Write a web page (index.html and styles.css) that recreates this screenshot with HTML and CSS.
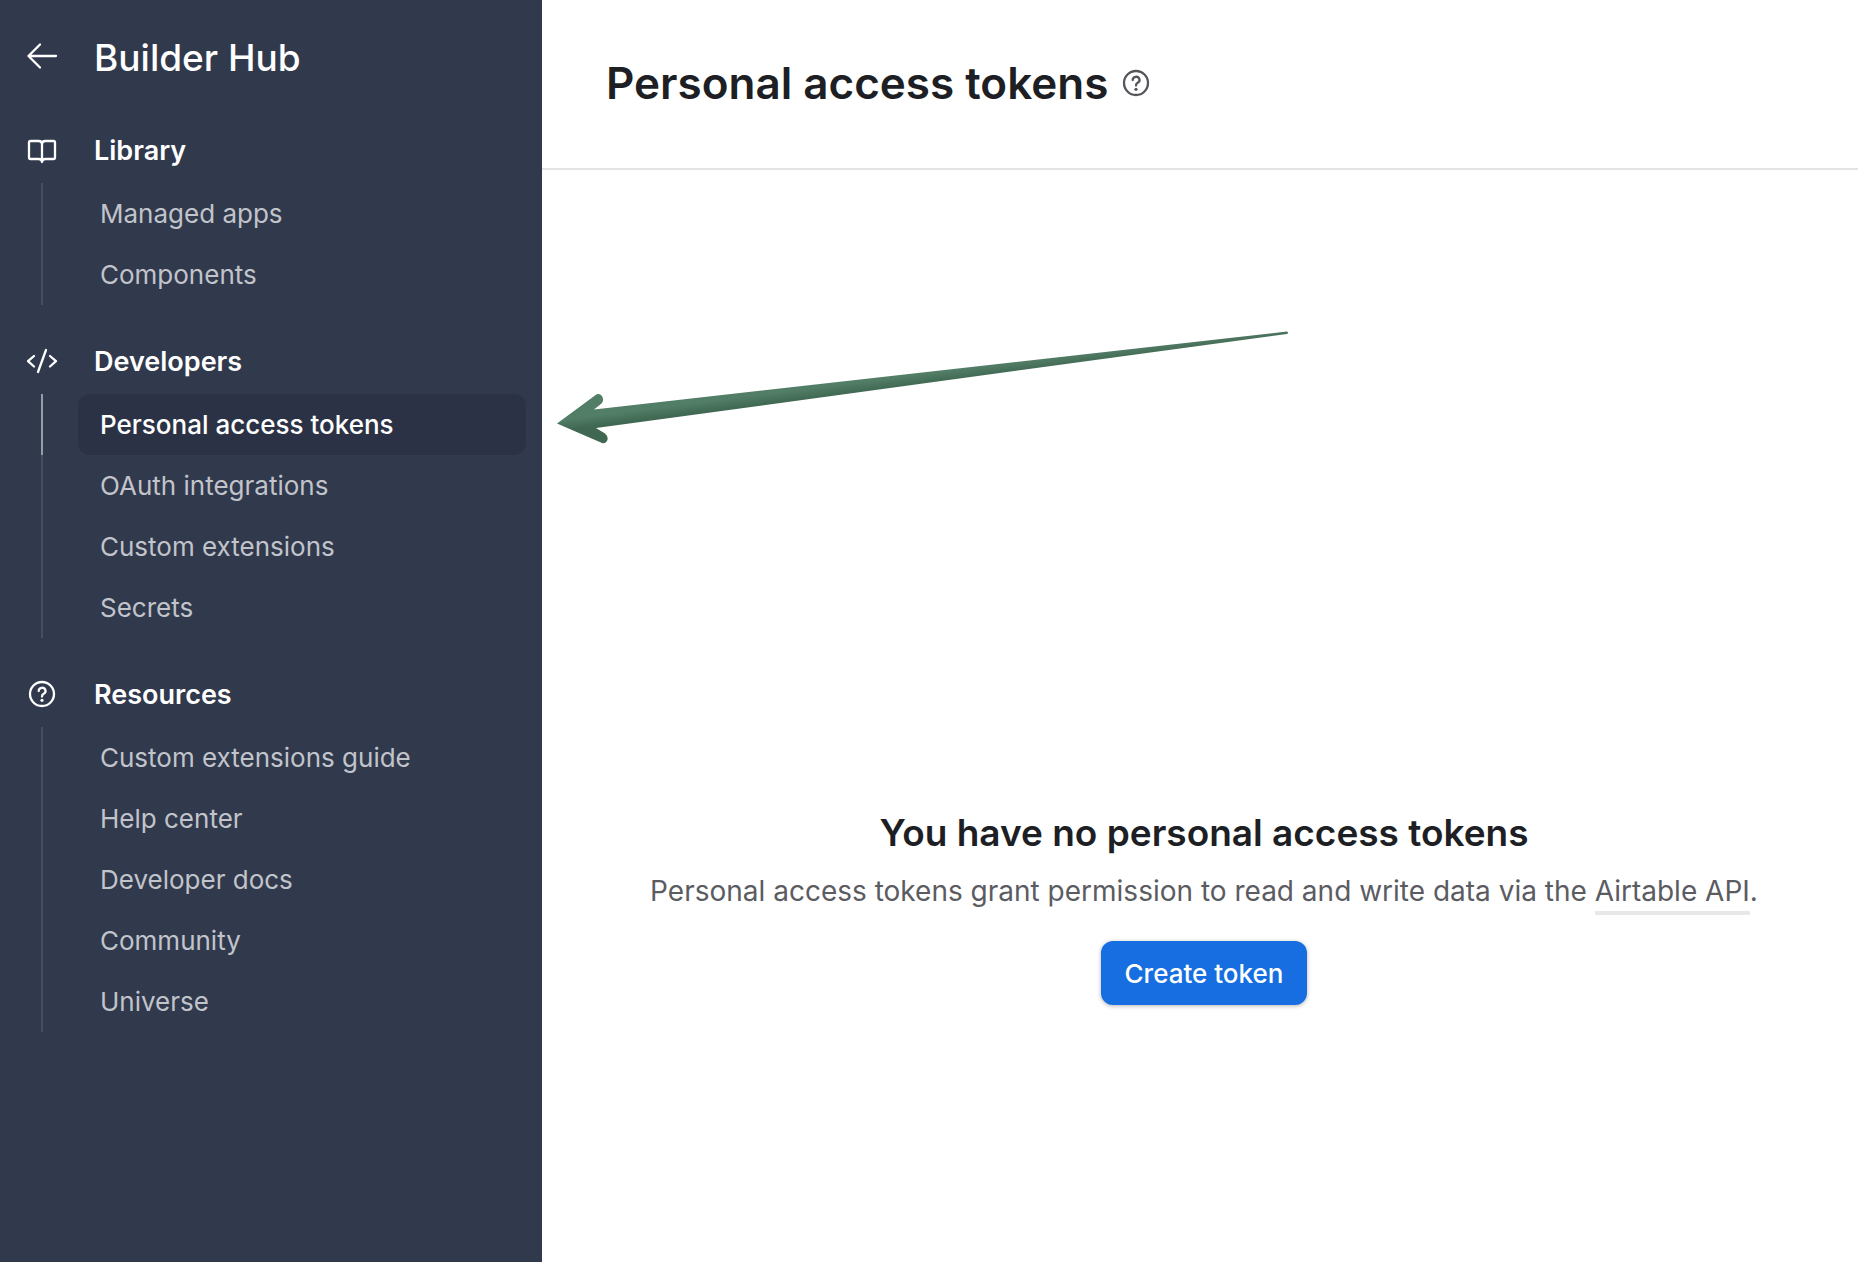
FILE: index.html
```html
<!DOCTYPE html>
<html lang="en">
<head>
    <meta charset="utf-8">
    <meta name="viewport" content="width=device-width, initial-scale=1.0">
    <link rel="stylesheet" href="styles.css">
    <title>Personal access tokens - Builder Hub</title>
</head>

<body>
    <div id="container">

        <nav id="sidebar">
            <div class="row sidebar-title">
                <a class="icon" href="#" aria-label="Back">
                    <svg viewBox="0 0 32 32"><path d="M2.500 15h27.500M14 3.500L2.500 15L14 26.500"/></svg>
                </a>
                <span>Builder Hub</span>
            </div>

            <div class="group">
                <h2 class="row">
                    <span class="icon">
                        <svg viewBox="0 0 32 32"><path d="M16 10v17.500M16 10c0-2-1.500-3-3.500-3H4.500Q3 7 3 8.500v15Q3 25 4.500 25h8c2 0 3.500 1 3.500 3c0-2 1.500-3 3.500-3h8q1.500 0 1.500-1.500v-15Q29 7 27.500 7h-8c-2 0-3.500 1-3.500 3z"/></svg>
                    </span>
                    Library
                </h2>
                <ul>
                    <li><a href="#">Managed apps</a></li>
                    <li><a href="#">Components</a></li>
                </ul>
            </div>

            <div class="group">
                <h2 class="row">
                    <span class="icon">
                        <svg viewBox="0 0 32 32"><path d="M8 11L2 16.200L8 21.500M24 11L30 16.200L24 21.500M20 5L12 27"/></svg>
                    </span>
                    Developers
                </h2>
                <ul>
                    <li class="active"><a href="#">Personal access tokens</a></li>
                    <li><a href="#">OAuth integrations</a></li>
                    <li><a href="#">Custom extensions</a></li>
                    <li><a href="#">Secrets</a></li>
                </ul>
            </div>

            <div class="group">
                <h2 class="row">
                    <span class="icon">
                        <svg viewBox="0 0 32 32"><circle cx="16" cy="16" r="12"/><path d="M12.700 13a3.400 3.200 0 1 1 5 2.800Q16 16.700 16 18.500"/><circle class="dot" cx="16" cy="22.300" r="1.600"/></svg>
                    </span>
                    Resources
                </h2>
                <ul>
                    <li><a href="#">Custom extensions guide</a></li>
                    <li><a href="#">Help center</a></li>
                    <li><a href="#">Developer docs</a></li>
                    <li><a href="#">Community</a></li>
                    <li><a href="#">Universe</a></li>
                </ul>
            </div>
        </nav>

        <main id="content">
            <header>
                <h1>Personal access tokens</h1>
                <button class="help" aria-label="Help">
                    <svg viewBox="0 0 32 32"><circle cx="16" cy="16" r="12"/><path d="M12.700 13a3.400 3.200 0 1 1 5 2.800Q16 16.700 16 18.500"/><circle class="dot" cx="16" cy="22.300" r="1.600"/></svg>
                </button>
            </header>

            <section class="empty">
                <h3>You have no personal access tokens</h3>
                <p>Personal access tokens grant permission to read and write data via the <a href="#">Airtable API</a>.</p>
                <button class="create">Create token</button>
            </section>

            <!-- arrow pointing at the active sidebar item -->
            <svg class="pointer" viewBox="0 0 732 114" aria-hidden="true">
                <defs>
                    <linearGradient id="green" gradientUnits="userSpaceOnUse" x1="200" y1="65" x2="201.400" y2="76">
                        <stop offset="0" stop-color="#527d67"/>
                        <stop offset="1" stop-color="#3f6751"/>
                    </linearGradient>
                </defs>
                <path fill="url(#green)" d="M0 93.500L38 65.500Q41 63 44 65Q48 69 44.500 73.500L37 79.500L730 1.500Q732 2.500 730 4L39 98L48 103.500Q52 107 50 111Q48 114 45 113Z"/>
            </svg>
        </main>

    </div>
</body>
</html>
```
FILE: styles.css
```css
body {
    margin: 0px;
    font-family: Inter, "Liberation Sans", sans-serif;
    color: #1d1f25;
    background-color: white;
}

h1, h2, h3, p, ul {
    margin: 0px;
    padding: 0px;
}

a {
    color: inherit;
    text-decoration: none;
}

button {
    border: 0px;
    font-family: inherit;
    cursor: pointer;
}

svg {
    display: block;
    fill: none;
    stroke: currentColor;
    stroke-width: 2.3;
    stroke-linecap: round;
    stroke-linejoin: round;
}

.dot {
    fill: currentColor;
    stroke: none;
}

#container {
    display: flex;
    min-height: 100vh;
}

/* sidebar */
#sidebar {
    box-sizing: border-box;
    flex: 0 0 542px;
    padding: 24px 16px 24px 26px;
    background-color: #31394d;
    color: white;
}

.row {
    display: flex;
    align-items: center;
    gap: 36px;
    height: 66px;
    font-size: 27px;
    font-weight: 600;
}

.sidebar-title {
    margin-bottom: 27px;
    font-size: 37px;
    font-weight: 500;
}

.icon {
    width: 32px;
    height: 32px;
}

.group {
    margin-bottom: 23px;
}

.group ul {
    margin-left: 15px;
    list-style: none;
    background: linear-gradient(#474e60, #474e60) left / 2px 100% no-repeat;
}

.group li {
    padding-left: 35px;
    border-left: 2px solid transparent;
}

.group li a {
    display: block;
    padding: 0px 22px;
    border-radius: 12px;
    line-height: 61px;
    font-size: 26px;
    color: #c1c4ca;
}

.group .active {
    border-left-color: #989ca6;
}

.group .active a {
    background-color: #2c3245;
    color: white;
    font-weight: 500;
}

/* main page */
#content {
    position: relative;
    flex: 1;
}

header {
    display: flex;
    align-items: center;
    gap: 12px;
    height: 165px;
    padding: 0px 0px 3px 64px;
    border-bottom: 2px solid #e4e4e4;
}

h1 {
    font-size: 44px;
    font-weight: 600;
}

.help {
    width: 32px;
    height: 32px;
    padding: 0px;
    background: none;
    color: #55565c;
}

.empty {
    display: flex;
    flex-direction: column;
    align-items: center;
    padding: 640px 0px 0px 8px;
    text-align: center;
}

h3 {
    line-height: 46px;
    font-size: 37px;
    font-weight: 600;
}

.empty p {
    margin: 15px 0px 30px;
    line-height: 40px;
    font-size: 28px;
    color: #5b5c62;
}

.empty p a {
    padding-bottom: 3px;
    border-bottom: 4px solid #e8e8e8;
}

.create {
    height: 64px;
    padding: 0px 24px;
    border-radius: 12px;
    background-color: #166ee1;
    box-shadow: 0px 1px 4px rgba(0, 0, 0, 0.3);
    color: white;
    font-size: 26px;
    font-weight: 500;
}

.pointer {
    position: absolute;
    top: 330px;
    left: 15px;
    width: 732px;
    stroke: none;
    pointer-events: none;
}
```
